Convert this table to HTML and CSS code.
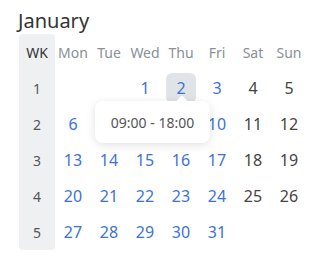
FILE: index.html
```html
<!DOCTYPE html>
<html>
<head>
<meta charset="utf-8">
<link rel="stylesheet" href="styles.css">
</head>
<body>
<div class="calendar">
  <div class="title">January</div>
  <div class="month">
    <div class="weeks">
      <div class="cell wk-head">WK</div>
      <div class="cell">1</div>
      <div class="cell">2</div>
      <div class="cell">3</div>
      <div class="cell">4</div>
      <div class="cell">5</div>
    </div>
    <div class="days">
      <div class="cell head">Mon</div>
      <div class="cell head">Tue</div>
      <div class="cell head">Wed</div>
      <div class="cell head">Thu</div>
      <div class="cell head">Fri</div>
      <div class="cell head">Sat</div>
      <div class="cell head">Sun</div>

      <div class="cell"></div>
      <div class="cell"></div>
      <div class="cell work">1</div>
      <div class="cell work"><span class="selected">2</span></div>
      <div class="cell work">3</div>
      <div class="cell off">4</div>
      <div class="cell off">5</div>

      <div class="cell work">6</div>
      <div class="cell work">7</div>
      <div class="cell work">8</div>
      <div class="cell work">9</div>
      <div class="cell work">10</div>
      <div class="cell off">11</div>
      <div class="cell off">12</div>

      <div class="cell work">13</div>
      <div class="cell work">14</div>
      <div class="cell work">15</div>
      <div class="cell work">16</div>
      <div class="cell work">17</div>
      <div class="cell off">18</div>
      <div class="cell off">19</div>

      <div class="cell work">20</div>
      <div class="cell work">21</div>
      <div class="cell work">22</div>
      <div class="cell work">23</div>
      <div class="cell work">24</div>
      <div class="cell off">25</div>
      <div class="cell off">26</div>

      <div class="cell work">27</div>
      <div class="cell work">28</div>
      <div class="cell work">29</div>
      <div class="cell work">30</div>
      <div class="cell work">31</div>
      <div class="cell"></div>
      <div class="cell"></div>
    </div>
    <div class="tooltip">09:00 - 18:00</div>
  </div>
</div>
</body>
</html>
```

FILE: styles.css
```css
html, body {
  margin: 0;
  padding: 0;
  background: #ffffff;
}

body {
  font-family: "Noto Sans", "Open Sans", sans-serif;
  color: #444;
}

.calendar {
  padding: 8px 0 0 19px;
}

.title {
  font-size: 20px;
  line-height: 26px;
  color: #333;
  margin-left: -1px;
}

.month {
  position: relative;
  display: flex;
}

/* week-number column with its own tinted background */
.weeks {
  display: flex;
  flex-direction: column;
  width: 36px;
  background: #eff0f2;
  border-radius: 4px;
  color: #555;
}

.days {
  display: grid;
  grid-template-columns: repeat(7, 36px);
  grid-auto-rows: 36px;
}

.cell {
  height: 36px;
  display: flex;
  align-items: center;
  justify-content: center;
  font-size: 16px;
}

.weeks .cell {
  font-size: 14px;
}

.weeks .wk-head {
  color: #333;
}

.head {
  font-size: 14px;
  color: #8a8f98;
}

.work {
  color: #3d72d6;
}

.off {
  color: #444;
}

.selected {
  width: 30px;
  height: 30px;
  border-radius: 6px;
  background: #e0e3e8;
  display: flex;
  align-items: center;
  justify-content: center;
}

/* hover popup with working hours */
.tooltip {
  position: absolute;
  left: 76px;
  top: 67px;
  width: 115px;
  height: 42px;
  box-sizing: border-box;
  display: flex;
  align-items: center;
  justify-content: center;
  background: #fff;
  border-radius: 8px;
  box-shadow: 0 2px 10px rgba(0, 0, 0, 0.12);
  font-size: 14px;
  color: #555;
}

.tooltip::before {
  content: "";
  position: absolute;
  top: -4px;
  left: 83px;
  width: 8px;
  height: 8px;
  background: #fff;
  transform: rotate(45deg);
  border-radius: 1px;
}
```
